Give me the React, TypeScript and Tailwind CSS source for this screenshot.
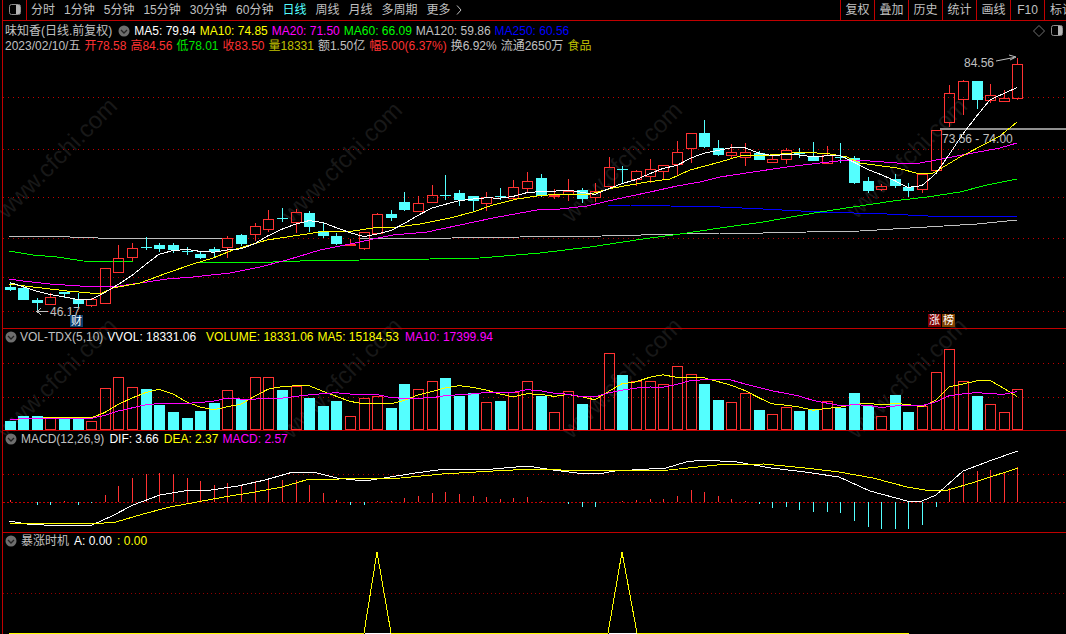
import type { ReactNode } from "react"

const RED = "#ff3232"
const CYAN = "#54ffff"
const LINE = "#c00000"

// up(1 red, 0 cyan), body top, body bottom, high, low (page y)
const candles: number[][] = [
  [0, 287, 290, 282, 291], [0, 288, 300, 287, 300], [0, 300, 303, 298, 312], [1, 297, 304, 293, 305],
  [0, 292, 294, 292, 298], [0, 299, 304, 293, 308], [1, 299, 305, 298, 307], [1, 268, 303, 268, 303],
  [1, 258, 272, 245, 272], [1, 248, 257, 243, 261], [0, 247, 248, 237, 250], [0, 245, 249, 243, 252],
  [0, 245, 250, 243, 253], [0, 251, 252, 247, 255], [0, 254, 258, 252, 259], [0, 249, 252, 247, 258],
  [1, 238, 247, 236, 258], [0, 235, 244, 234, 246], [1, 226, 234, 223, 241], [1, 219, 229, 210, 232],
  [0, 218, 219, 208, 222], [1, 212, 222, 209, 233], [0, 213, 227, 211, 232], [0, 231, 236, 222, 238],
  [0, 236, 244, 233, 245], [1, 244, 245, 239, 245], [1, 232, 248, 232, 250], [1, 214, 233, 213, 233],
  [0, 214, 218, 210, 221], [0, 202, 210, 192, 211], [1, 203, 211, 196, 211], [1, 195, 202, 185, 202],
  [0, 195, 196, 175, 200], [0, 193, 200, 190, 206], [0, 196, 201, 196, 212], [1, 197, 203, 192, 211],
  [0, 196, 197, 188, 200], [1, 187, 198, 180, 198], [1, 181, 188, 172, 193], [0, 178, 196, 174, 197],
  [1, 195, 196, 189, 199], [1, 191, 194, 179, 201], [0, 190, 199, 188, 203], [1, 191, 197, 183, 202],
  [1, 167, 186, 157, 186], [0, 169, 170, 166, 183], [1, 171, 179, 170, 186], [1, 169, 176, 159, 183],
  [1, 165, 171, 165, 180], [1, 152, 164, 141, 175], [1, 133, 148, 133, 163], [0, 133, 147, 120, 148],
  [0, 148, 155, 140, 156], [1, 152, 155, 144, 158], [1, 152, 157, 143, 166], [0, 153, 160, 151, 160],
  [1, 159, 162, 154, 163], [1, 150, 159, 148, 164], [0, 152, 154, 148, 158], [0, 157, 161, 142, 161],
  [1, 155, 163, 146, 164], [0, 157, 158, 143, 163], [0, 158, 183, 156, 184], [0, 181, 191, 177, 193],
  [1, 186, 189, 184, 191], [0, 179, 186, 174, 188], [0, 187, 191, 183, 197], [1, 174, 189, 173, 193],
  [1, 130, 170, 130, 170], [1, 93, 122, 85, 127], [1, 81, 99, 80, 115], [0, 81, 100, 81, 109],
  [1, 95, 100, 84, 103], [1, 98, 101, 90, 101], [1, 64, 98, 58, 100],
]

const xAt = (i: number) => Math.round(9.5 + 13.62 * i)

const closes = candles.map((c) => (c[0] ? c[1] : c[2]))
const ma5 = closes.map((_, i) => {
  const all = [280, 280, 280, 283, ...closes]
  const win = all.slice(i, i + 5)
  return [xAt(i), win.reduce((a, b) => a + b, 0) / 5]
})

const ma10 = [[9,284],[33,287],[67,291],[90,293],[100,294],[113,288],[140,283],[167,273],[193,264],[213,258],[233,250],[267,240],[300,235],[320,232],[353,231],[380,227],[397,227],[420,224],[450,218],[473,212],[493,205],[517,199],[537,196],[560,194],[590,194],[613,188],[647,182],[670,179],[690,170],[720,162],[740,156],[770,155],[803,152],[830,154],[847,157],[860,163],[897,168],[920,174],[933,173],[940,169],[960,157],[987,143],[1000,136],[1017,122]]
const ma20 = [[9,279],[23,281],[50,284],[80,286],[113,287],[140,283],[167,279],[193,277],[230,273],[260,267],[287,260],[320,250],[360,242],[373,239],[393,235],[427,232],[460,225],[493,218],[520,213],[537,210],[560,209],[587,206],[617,199],[650,192],[677,186],[700,182],[720,177],[753,172],[787,167],[820,163],[847,160],[870,161],[897,163],[920,163],[947,158],[973,153],[1000,148],[1017,143]]
const ma60 = [[9,251],[33,255],[57,257],[83,261],[133,262],[200,262],[273,262],[300,261],[360,260],[430,259],[480,258],[540,253],[590,247],[643,239],[680,234],[720,228],[763,222],[820,212],[853,207],[893,201],[927,197],[960,192],[987,185],[1017,179]]
const ma120 = [[9,236],[43,236],[70,237],[98,238],[180,238],[233,239],[360,239],[452,238],[520,237],[602,236],[720,233],[763,233],[807,232],[860,231],[927,227],[977,224],[1017,220]]
const ma250 = [[608,205],[630,205],[670,206],[720,207],[763,209],[820,212],[887,214],[928,216],[1017,216]]

const vol = [8,13,13,12,10,12,8,41,52,42,40,24,17,11,18,26,39,30,52,52,39,43,31,23,28,13,31,33,21,45,40,48,51,33,36,27,28,37,48,33,17,38,25,33,76,54,48,48,45,63,55,45,29,27,36,19,15,22,18,20,28,21,36,23,13,34,17,23,57,80,48,33,25,17,40]

const volBase = 429
const maOf = (n: number) =>
  vol.map((_, i) => {
    const all = [...Array(n - 1).fill(10), ...vol]
    const win = all.slice(i, i + n)
    return [xAt(i), volBase - win.reduce((a, b) => a + b, 0) / n]
  })

const macd = [2,0,-3,-3,1,-3,-1,7,16,24,28,29,28,24,21,17,19,17,21,22,22,22,17,9,2,-3,-3,1,1,4,6,9,10,8,6,5,3,4,5,1,0,-2,-5,-5,0,1,2,3,3,6,12,10,6,3,1,-2,-6,-5,-8,-10,-10,-11,-19,-25,-27,-27,-27,-23,-5,14,29,31,32,30,35]

const dif = [[9,521],[27,524],[44,525],[92,525],[112,516],[133,505],[160,495],[184,491],[211,490],[238,486],[265,480],[293,472],[313,472],[337,478],[364,481],[384,478],[415,473],[446,469],[493,469],[527,466],[553,470],[577,473],[598,474],[615,471],[666,468],[686,462],[703,460],[737,462],[771,468],[805,472],[839,477],[870,491],[907,501],[922,501],[936,495],[963,471],[992,460],[1018,451]]
const dea = [[9,523],[92,524],[116,522],[143,514],[170,507],[197,502],[224,497],[255,492],[282,487],[306,480],[340,479],[401,478],[442,474],[493,471],[533,469],[589,471],[669,470],[717,465],[764,464],[805,468],[839,472],[873,478],[907,487],[931,491],[948,490],[975,482],[1018,468]]

const pts = (p: number[][]) => p.map((q) => q.join(",")).join(" ")

function Curve({ points, color }: { points: number[][]; color: string }) {
  return <polyline points={pts(points)} fill="none" stroke={color} strokeWidth={1} shapeRendering="crispEdges" />
}

function Dots({ y, dash = "1 4", color = LINE }: { y: number; dash?: string; color?: string }) {
  return <line x1={3} x2={1066} y1={y + 0.5} y2={y + 0.5} stroke={color} strokeDasharray={dash} shapeRendering="crispEdges" />
}

function BoxIcon() {
  return (
    <svg width="12" height="11" viewBox="0 0 12 11">
      <rect x="7" y="1" width="4" height="9" fill="#b4b4b4" />
      <rect x="0.5" y="0.5" width="11" height="10" rx="2" fill="none" stroke="#8c8c8c" />
    </svg>
  )
}

function Fold() {
  return (
    <svg width="12" height="12" viewBox="0 0 12 12" className="shrink-0">
      <circle cx="6" cy="6" r="5.5" fill="#6e6e6e" />
      <path d="M3 5 L6 8 L9 5" fill="none" stroke="#222" strokeWidth="1.3" />
    </svg>
  )
}

function Panel(props: { top: number; h: number; className: string; header: ReactNode; children: ReactNode }) {
  return (
    <div className={"relative shrink-0 " + props.className}>
      <svg className="absolute left-0 top-0" width={1063} height={props.h} viewBox={`3 ${props.top} 1063 ${props.h}`}>
        {props.children}
      </svg>
      {props.header}
    </div>
  )
}

function Head({ children }: { children: ReactNode }) {
  return <div className="relative flex h-4 items-center whitespace-nowrap pl-[2px] text-[#c0c0c0]">{children}</div>
}

const marks = [
  "left-[-28px] top-[146px]",
  "left-[257px] top-[150px]",
  "left-[537px] top-[150px]",
  "left-[822px] top-[146px]",
  "left-[-28px] top-[366px]",
  "left-[257px] top-[366px]",
  "left-[537px] top-[366px]",
  "left-[822px] top-[366px]",
]

const tabs = ["分时", "1分钟", "5分钟", "15分钟", "30分钟", "60分钟"]
const tabs2 = ["周线", "月线", "多周期", "更多"]
const tools = ["复权", "叠加", "历史", "统计", "画线", "F10"]

export default function App() {
  return (
    <div className="relative flex h-[634px] w-[1066px] overflow-hidden bg-black font-['Liberation_Sans','Noto_Sans_CJK_SC',sans-serif] text-[12px] leading-none text-[#c0c0c0]">
      {marks.map((m) => (
        <span key={m} className={"absolute w-[170px] -rotate-45 text-center text-[24px] text-[#181818] " + m}>
          www.cfchi.com
        </span>
      ))}
      <div className="relative w-[3px] shrink-0 border-r border-[#c00000]" />
      <div className="relative flex w-[1063px] flex-col">
        <div className="flex h-[21px] shrink-0 items-center border-b border-[#c00000]">
          <div className="flex h-full w-[24px] items-center justify-center border-r border-[#c00000] pb-[2px] pl-[1px]">
            <BoxIcon />
          </div>
          <div className="flex items-center gap-[9px] pl-[4px]">
            {tabs.map((t) => (
              <span key={t}>{t}</span>
            ))}
            <span className="text-[#54ffff]">日线</span>
            {tabs2.map((t) => (
              <span key={t}>{t}</span>
            ))}
            <svg width="6" height="10" viewBox="0 0 6 10" className="ml-[-4px]">
              <path d="M1 0.5 L5 5 L1 9.5" fill="none" stroke="#c0c0c0" />
            </svg>
          </div>
          <div className="ml-auto flex h-full">
            {tools.map((t) => (
              <div key={t} className="flex w-[34px] items-center justify-center border-l border-[#c00000]">
                {t}
              </div>
            ))}
            <div className="flex w-[22px] items-center overflow-hidden whitespace-nowrap border-l border-[#c00000] pl-[5px]">标记</div>
          </div>
        </div>

        <Panel
          top={21}
          h={308}
          className="h-[308px] border-b border-[#c00000]"
          header={
            <>
              <div className="relative flex h-[15px] items-center gap-[4px] whitespace-nowrap pl-[2px] pt-[4px]">
                <span className="mr-[2px]">味知香(日线.前复权)</span>
                <Fold />
                <span className="text-white">MA5: 79.94</span>
                <span className="text-[#ffff00]">MA10: 74.85</span>
                <span className="text-[#ff00ff]">MA20: 71.50</span>
                <span className="text-[#00ff00]">MA60: 66.09</span>
                <span>MA120: 59.86</span>
                <span className="text-[#0000ff]">MA250: 60.56</span>
              </div>
              <div className="relative flex h-[15px] items-center gap-[4px] whitespace-nowrap pl-[2px] pt-[4px]">
                <span>2023/02/10/五</span>
                <span className="text-[#ff3232]">开78.58</span>
                <span className="text-[#ff3232]">高84.56</span>
                <span className="text-[#00e600]">低78.01</span>
                <span className="text-[#ff3232]">收83.50</span>
                <span className="text-[#c0c000]">量18331</span>
                <span>额1.50亿</span>
                <span className="text-[#ff3232]">幅5.00(6.37%)</span>
                <span>换6.92%</span>
                <span>流通2650万</span>
                <span className="text-[#c0c000]">食品</span>
              </div>
              <svg width="12" height="12" viewBox="0 0 12 12" className="absolute left-[1030px] top-[4px]">
                <path d="M6 0.5 L11.5 6 L6 11.5 L0.5 6 Z" fill="none" stroke="#707070" />
              </svg>
              <div className="absolute left-[1048px] top-[4px]">
                <BoxIcon />
              </div>
              <span className="absolute left-[961px] top-[36px]">84.56</span>
              <span className="absolute left-[939px] top-[112px]">73.56 - 74.00</span>
              <span className="absolute left-[47px] top-[285px]">46.17</span>
              <span className="absolute left-[67px] top-[294px] flex h-[12px] w-[13px] items-center justify-center bg-[#0c3c6c] text-[11px] text-white">财</span>
              <span className="absolute left-[925px] top-[293px] flex h-[13px] w-[13px] items-center justify-center bg-[#800000] text-[11px] text-white">涨</span>
              <span className="absolute left-[939px] top-[293px] flex h-[13px] w-[13px] items-center justify-center bg-[#804000] text-[11px] text-white">榜</span>
            </>
          }
        >
          {[97, 149, 197, 238, 277, 311].map((y) => (
            <Dots key={y} y={y} />
          ))}
          <line x1={0} x2={3} y1={226} y2={226} stroke={LINE} />
          <rect x={940} y={128} width={126} height={2} fill="#909090" />
          <Curve points={ma250} color="#0000ff" />
          <Curve points={ma120} color="#c0c0c0" />
          <Curve points={ma60} color="#00ff00" />
          {candles.map((c, i) => {
            const x = xAt(i)
            if (c[0]) {
              return (
                <g key={i} stroke={RED} shapeRendering="crispEdges">
                  <line x1={x + 0.5} x2={x + 0.5} y1={c[3]} y2={c[1]} />
                  <line x1={x + 0.5} x2={x + 0.5} y1={c[2]} y2={c[4]} />
                  <rect x={x - 4.5} y={c[1] + 0.5} width={10} height={c[2] - c[1]} fill={c[2] - c[1] < 2 ? RED : "none"} />
                </g>
              )
            }
            return (
              <g key={i} shapeRendering="crispEdges">
                <line x1={x + 0.5} x2={x + 0.5} y1={c[3]} y2={c[4]} stroke={CYAN} />
                <rect x={x - 5} y={c[1]} width={11} height={c[2] - c[1]} fill={CYAN} />
              </g>
            )
          })}
          <Curve points={ma20} color="#ff00ff" />
          <Curve points={ma10} color="#ffff00" />
          <Curve points={ma5} color="#ffffff" />
          <path d="M996 61 L1014 57.5 M1009 55 L1016 57 L1010 60" fill="none" stroke="#c0c0c0" />
          <path d="M37 311.5 H48 M41 308 L37 311.5 L41 315" fill="none" stroke="#c0c0c0" shapeRendering="crispEdges" />
        </Panel>

        <Panel
          top={329}
          h={102}
          className="h-[102px] border-b border-[#c00000]"
          header={
            <Head>
              <Fold />
              <span className="ml-[3px]">VOL-TDX(5,10)</span>
              <span className="ml-[4px] text-white">VVOL: 18331.06</span>
              <span className="ml-[10px] text-[#ffff00]">VOLUME: 18331.06</span>
              <span className="ml-[4px] text-[#ffff00]">MA5: 15184.53</span>
              <span className="ml-[6px] text-[#ff00ff]">MA10: 17399.94</span>
            </Head>
          }
        >
          <Dots y={363} />
          <Dots y={397} />
          <line x1={0} x2={3} y1={381} y2={381} stroke={LINE} />
          {vol.map((h, i) => {
            const x = xAt(i)
            return candles[i][0] ? (
              <rect key={i} x={x - 4.5} y={volBase - h + 0.5} width={10} height={h} fill="none" stroke={RED} shapeRendering="crispEdges" />
            ) : (
              <rect key={i} x={x - 5} y={volBase - h} width={11} height={h + 1} fill={CYAN} shapeRendering="crispEdges" />
            )
          })}
          <Curve points={maOf(5)} color="#ffff00" />
          <Curve points={maOf(10)} color="#ff00ff" />
        </Panel>

        <Panel
          top={431}
          h={102}
          className="h-[102px] border-b border-[#c00000]"
          header={
            <Head>
              <Fold />
              <span className="ml-[4px]">MACD(12,26,9)</span>
              <span className="ml-[5px] text-white">DIF: 3.66</span>
              <span className="ml-[5px] text-[#ffff00]">DEA: 2.37</span>
              <span className="ml-[4px] text-[#ff00ff]">MACD: 2.57</span>
            </Head>
          }
        >
          <Dots y={474} />
          <Dots y={502} dash="2 2" />
          <line x1={0} x2={3} y1={442} y2={442} stroke={LINE} />
          {macd.map((v, i) =>
            v === 0 ? null : (
              <line
                key={i}
                x1={xAt(i) + 0.5}
                x2={xAt(i) + 0.5}
                y1={502}
                y2={502 - v}
                stroke={v > 0 ? RED : CYAN}
                shapeRendering="crispEdges"
              />
            ),
          )}
          <Curve points={dif} color="#ffffff" />
          <Curve points={dea} color="#ffff00" />
        </Panel>

        <Panel
          top={533}
          h={101}
          className="h-[101px]"
          header={
            <Head>
              <Fold />
              <span className="ml-[4px]">暴涨时机</span>
              <span className="ml-[5px] text-white">A: 0.00</span>
              <span className="ml-[5px] text-[#ffff00]">: 0.00</span>
            </Head>
          }
        >
          <Dots y={593} dash="1 3" color="#900000" />
          <polyline
            points="9,633 364,633 377,552 391,633 608,633 622,552 637,633 909,633"
            fill="none"
            stroke="#ffff00"
            shapeRendering="crispEdges"
          />
          <line x1={365} x2={391} y1={633} y2={633} stroke="#ffffff" shapeRendering="crispEdges" />
          <line x1={609} x2={637} y1={633} y2={633} stroke="#ffffff" shapeRendering="crispEdges" />
        </Panel>
      </div>
    </div>
  )
}
